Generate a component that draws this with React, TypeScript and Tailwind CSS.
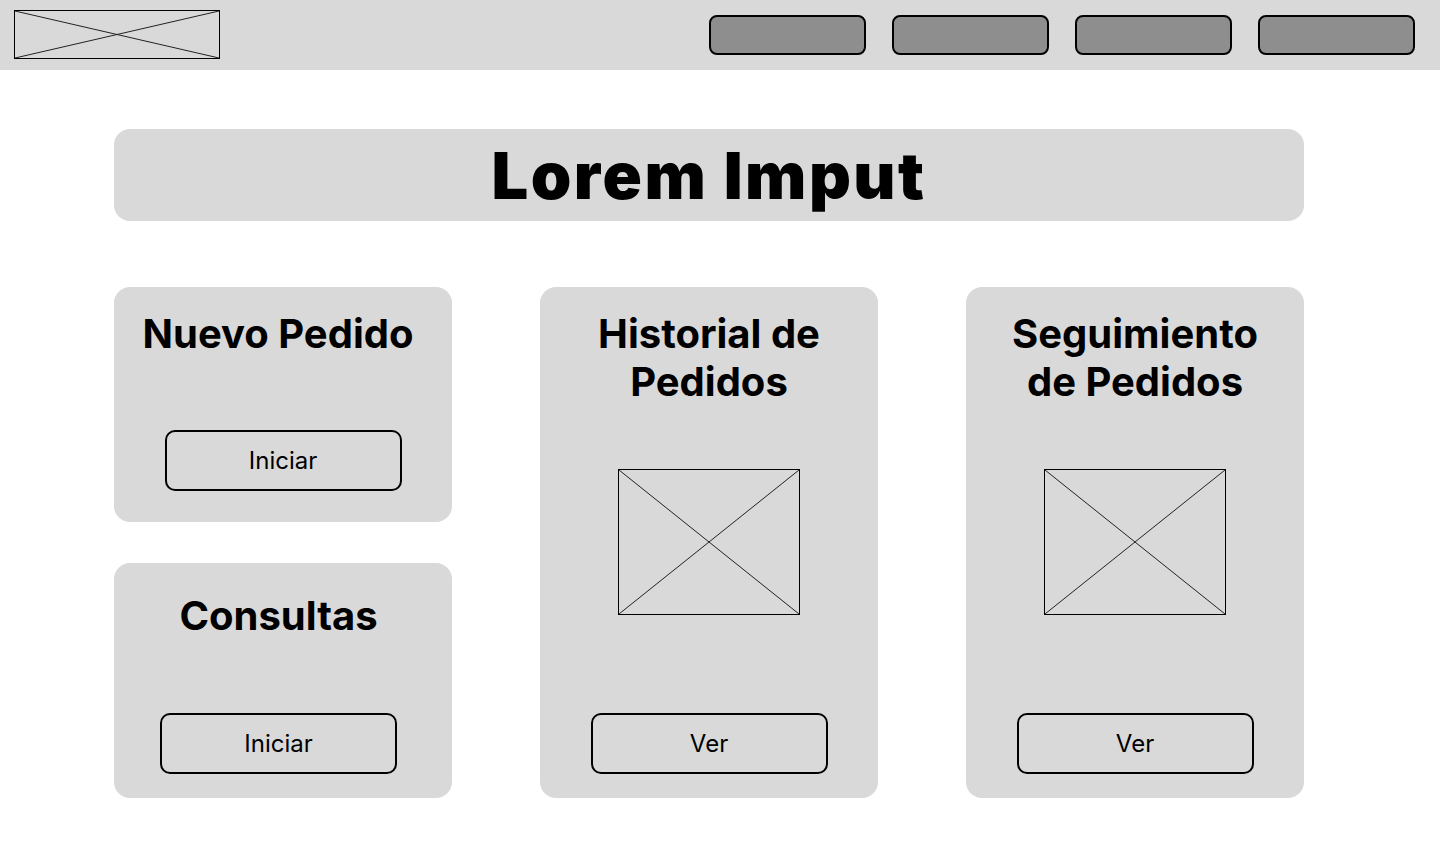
import React from "react";

function Placeholder({ className }: { className: string }) {
  return (
    <div className={`relative border border-black ${className}`}>
      <svg className="absolute inset-0 h-full w-full" preserveAspectRatio="none" viewBox="0 0 100 100">
        <line x1="0" y1="0" x2="100" y2="100" stroke="#222" strokeWidth="1" vectorEffect="non-scaling-stroke" />
        <line x1="100" y1="0" x2="0" y2="100" stroke="#222" strokeWidth="1" vectorEffect="non-scaling-stroke" />
      </svg>
    </div>
  );
}

function Btn({ label, className = "" }: { label: string; className?: string }) {
  return (
    <button
      className={`flex h-[61px] w-[237px] items-center justify-center rounded-[10px] border-2 border-black text-[24px] font-normal leading-none text-black ${className}`}
    >
      {label}
    </button>
  );
}

export default function App() {
  return (
    <div className="min-h-[859px] w-[1440px] bg-white" style={{ fontFamily: "Inter, 'Noto Sans', sans-serif" }}>
      <header className="flex h-[70px] items-center justify-between bg-[#d9d9d9] pl-[14px] pr-[25px]">
        <Placeholder className="mb-[1px] h-[49px] w-[206px]" />
        <nav className="flex gap-[26px]">
          {[0, 1, 2, 3].map((i) => (
            <div key={i} className="h-[40px] w-[157px] rounded-[8px] border-2 border-black bg-[#8e8e8e]" />
          ))}
        </nav>
      </header>

      <main className="ml-[114px] w-[1190px] pt-[59px]">
        <div className="flex h-[92px] items-center justify-center rounded-2xl bg-[#d9d9d9]">
          <h1 className="text-[65px] font-black leading-none tracking-[2.5px] text-black">Lorem Imput</h1>
        </div>

        <div className="mt-[66px] grid grid-cols-[338px_338px_338px] gap-x-[88px]">
          <div className="flex flex-col gap-[41px]">
            <div className="flex h-[235px] flex-col items-center rounded-2xl bg-[#d9d9d9] pt-[23px]">
              <h2 className="mr-[10px] text-[40px] font-bold leading-[48px] text-black">Nuevo Pedido</h2>
              <Btn label="Iniciar" className="mt-[72px]" />
            </div>
            <div className="flex h-[235px] flex-col items-center rounded-2xl bg-[#d9d9d9] pt-[29px]">
              <h2 className="mr-[9px] text-[40px] font-bold leading-[48px] text-black">Consultas</h2>
              <Btn label="Iniciar" className="mr-[9px] mt-[73px]" />
            </div>
          </div>

          <div className="flex h-[511px] flex-col items-center rounded-2xl bg-[#d9d9d9] pt-[23px]">
            <h2 className="text-center text-[40px] font-bold leading-[48px] text-black">
              Historial de
              <br />
              Pedidos
            </h2>
            <Placeholder className="mt-[63px] h-[146px] w-[182px]" />
            <Btn label="Ver" className="mt-[98px]" />
          </div>

          <div className="flex h-[511px] flex-col items-center rounded-2xl bg-[#d9d9d9] pt-[23px]">
            <h2 className="text-center text-[40px] font-bold leading-[48px] text-black">
              Seguimiento
              <br />
              de Pedidos
            </h2>
            <Placeholder className="mt-[63px] h-[146px] w-[182px]" />
            <Btn label="Ver" className="mt-[98px]" />
          </div>
        </div>
      </main>
    </div>
  );
}
